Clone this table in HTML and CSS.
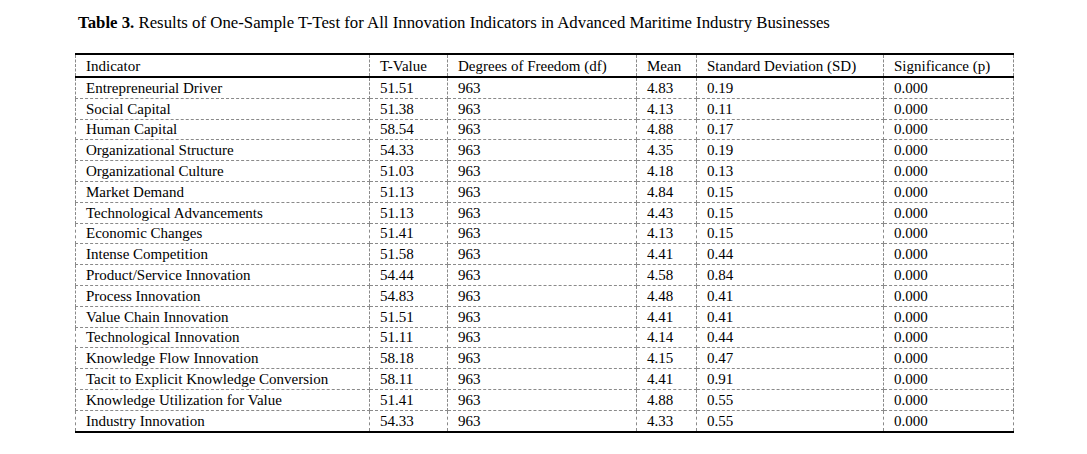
FILE: index.html
```html
<!DOCTYPE html>
<html>
<head>
<meta charset="utf-8">
<link rel="stylesheet" href="styles.css">
</head>
<body>
<div class="page">
  <p class="caption"><b>Table 3.</b> Results of One-Sample T-Test for All Innovation Indicators in Advanced Maritime Industry Businesses</p>
  <table class="results">
    <colgroup>
      <col class="c1"><col class="c2"><col class="c3"><col class="c4"><col class="c5"><col class="c6">
    </colgroup>
    <thead>
      <tr><th>Indicator</th><th>T-Value</th><th>Degrees of Freedom (df)</th><th>Mean</th><th>Standard Deviation (SD)</th><th>Significance (p)</th></tr>
    </thead>
    <tbody>
      <tr><td>Entrepreneurial Driver</td><td>51.51</td><td>963</td><td>4.83</td><td>0.19</td><td>0.000</td></tr>
      <tr><td>Social Capital</td><td>51.38</td><td>963</td><td>4.13</td><td>0.11</td><td>0.000</td></tr>
      <tr><td>Human Capital</td><td>58.54</td><td>963</td><td>4.88</td><td>0.17</td><td>0.000</td></tr>
      <tr><td>Organizational Structure</td><td>54.33</td><td>963</td><td>4.35</td><td>0.19</td><td>0.000</td></tr>
      <tr><td>Organizational Culture</td><td>51.03</td><td>963</td><td>4.18</td><td>0.13</td><td>0.000</td></tr>
      <tr><td>Market Demand</td><td>51.13</td><td>963</td><td>4.84</td><td>0.15</td><td>0.000</td></tr>
      <tr><td>Technological Advancements</td><td>51.13</td><td>963</td><td>4.43</td><td>0.15</td><td>0.000</td></tr>
      <tr><td>Economic Changes</td><td>51.41</td><td>963</td><td>4.13</td><td>0.15</td><td>0.000</td></tr>
      <tr><td>Intense Competition</td><td>51.58</td><td>963</td><td>4.41</td><td>0.44</td><td>0.000</td></tr>
      <tr><td>Product/Service Innovation</td><td>54.44</td><td>963</td><td>4.58</td><td>0.84</td><td>0.000</td></tr>
      <tr><td>Process Innovation</td><td>54.83</td><td>963</td><td>4.48</td><td>0.41</td><td>0.000</td></tr>
      <tr><td>Value Chain Innovation</td><td>51.51</td><td>963</td><td>4.41</td><td>0.41</td><td>0.000</td></tr>
      <tr><td>Technological Innovation</td><td>51.11</td><td>963</td><td>4.14</td><td>0.44</td><td>0.000</td></tr>
      <tr><td>Knowledge Flow Innovation</td><td>58.18</td><td>963</td><td>4.15</td><td>0.47</td><td>0.000</td></tr>
      <tr><td>Tacit to Explicit Knowledge Conversion</td><td>58.11</td><td>963</td><td>4.41</td><td>0.91</td><td>0.000</td></tr>
      <tr><td>Knowledge Utilization for Value</td><td>51.41</td><td>963</td><td>4.88</td><td>0.55</td><td>0.000</td></tr>
      <tr><td>Industry Innovation</td><td>54.33</td><td>963</td><td>4.33</td><td>0.55</td><td>0.000</td></tr>
    </tbody>
  </table>
</div>
</body>
</html>
```
FILE: styles.css
```css
html, body {
  margin: 0;
  padding: 0;
  background: #ffffff;
}
.page {
  padding: 13px 0 0 75px;
  font-family: "Liberation Serif", "Times New Roman", serif;
  color: #000000;
}
.caption {
  margin: 0 0 0 3px;
  font-size: 16.8px;
  line-height: 19px;
}
.results {
  margin-top: 21px;
  border-collapse: collapse;
  table-layout: fixed;
  width: 938px;
  font-size: 15px;
}
.c1 { width: 294px; }
.c2 { width: 78px; }
.c3 { width: 189px; }
.c4 { width: 60px; }
.c5 { width: 187px; }
.c6 { width: 130px; }
.results th,
.results td {
  font-weight: normal;
  text-align: left;
  padding: 0 0 0 10px;
  height: 19.8px;
  line-height: 16px;
  border-left: 1px dashed #8a8a8a;
  border-right: 1px dashed #8a8a8a;
  border-bottom: 1px dashed #8a8a8a;
  white-space: nowrap;
}
.results thead th {
  height: 21px;
  border-top: 2px solid #000000;
  border-bottom: 2px solid #000000;
}
.results tbody tr:last-child td {
  border-bottom: 2px solid #000000;
}
```
